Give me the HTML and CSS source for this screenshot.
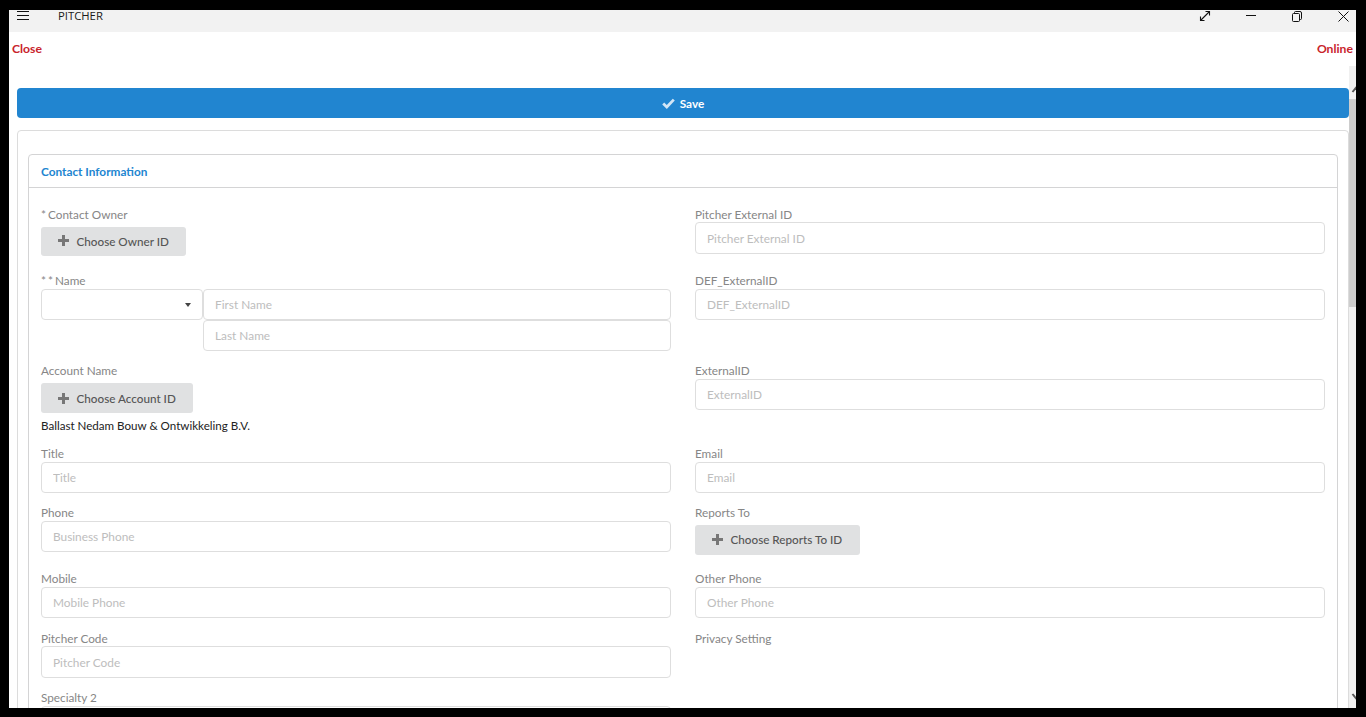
FILE: index.html
```html
<!DOCTYPE html>
<html lang="en">
<head>
    <meta charset="UTF-8">
    <meta name="viewport" content="width=device-width, initial-scale=1.0">
    <title>Pitcher</title>
    <link rel="stylesheet" href="styles.css">
</head>
<body>

    <div class="app-window">
        <!-- Title bar -->
        <div class="title-bar">
            <div class="title-left">
                <svg class="menu-icon" width="14" height="10" viewBox="0 0 14 10"><path d="M1 1.500h12M1 5.500h12M1 9.500h12" stroke="#111" fill="none"/></svg>
                <span class="app-name">PITCHER</span>
            </div>
            <div class="window-controls">
                <svg class="ctl-expand" width="12" height="12" viewBox="0 0 12 12"><path d="M1.500 10.500l9-9M6.500 1.500h4v4M1.500 6.500v4h4" stroke="#111" fill="none" stroke-width="1.100"/></svg>
                <svg class="ctl-min" width="10" height="2" viewBox="0 0 10 2"><path d="M0 .5h10" stroke="#111" fill="none"/></svg>
                <svg class="ctl-restore" width="10" height="11" viewBox="0 0 10 11"><path d="M.5 3.500a1 1 0 0 1 1-1h5a1 1 0 0 1 1 1v6a1 1 0 0 1-1 1h-5a1 1 0 0 1-1-1zM2.500 2.500v-1a1 1 0 0 1 1-1h4.500a1.500 1.500 0 0 1 1.500 1.500v5.500a1 1 0 0 1-1 1h-1" stroke="#111" fill="none"/></svg>
                <svg class="ctl-close" width="11" height="11" viewBox="0 0 11 11"><path d="M.5.5l10 10M10.500.5l-10 10" stroke="#111" fill="none"/></svg>
            </div>
        </div>

        <div class="status-row">
            <span>Close</span>
            <span>Online</span>
        </div>

        <div class="body-row">
            <div class="main-content">
                <button class="save-button">
                    <svg width="13" height="11" viewBox="0 0 13 11"><path d="M1.200 5.400l3.600 3.500 7-7.300" stroke="#d3e6f6" stroke-width="2.800" fill="none"/></svg>
                    Save
                </button>

                <div class="outer-card">
                    <div class="panel">
                        <div class="panel-heading">Contact Information</div>
                        <div class="form-grid">
                            <div class="field">
                                <label><span class="req">*</span>Contact Owner</label>
                                <button class="choose-button short"><span class="plus"></span>Choose Owner ID</button>
                            </div>
                            <div class="field">
                                <label>Pitcher External ID</label>
                                <input class="tall" placeholder="Pitcher External ID">
                            </div>

                            <div class="field">
                                <label><span class="req">*</span><span class="req">*</span>Name</label>
                                <div class="name-group">
                                    <div class="salutation"><span class="caret"></span></div>
                                    <div class="name-inputs">
                                        <input placeholder="First Name">
                                        <input placeholder="Last Name">
                                    </div>
                                </div>
                            </div>
                            <div class="field">
                                <label>DEF_ExternalID</label>
                                <input placeholder="DEF_ExternalID">
                            </div>

                            <div class="field">
                                <label>Account Name</label>
                                <button class="choose-button"><span class="plus"></span>Choose Account ID</button>
                                <p class="field-value">Ballast Nedam Bouw &amp; Ontwikkeling B.V.</p>
                            </div>
                            <div class="field">
                                <label>ExternalID</label>
                                <input placeholder="ExternalID">
                            </div>

                            <div class="field">
                                <label>Title</label>
                                <input placeholder="Title">
                            </div>
                            <div class="field">
                                <label>Email</label>
                                <input placeholder="Email">
                            </div>

                            <div class="field">
                                <label>Phone</label>
                                <input placeholder="Business Phone">
                            </div>
                            <div class="field">
                                <label>Reports To</label>
                                <button class="choose-button raised"><span class="plus"></span>Choose Reports To ID</button>
                            </div>

                            <div class="field">
                                <label>Mobile</label>
                                <input placeholder="Mobile Phone">
                            </div>
                            <div class="field">
                                <label>Other Phone</label>
                                <input placeholder="Other Phone">
                            </div>

                            <div class="field">
                                <label>Pitcher Code</label>
                                <input class="tall" placeholder="Pitcher Code">
                            </div>
                            <div class="field">
                                <label>Privacy Setting</label>
                            </div>

                            <div class="field">
                                <label>Specialty 2</label>
                                <input>
                            </div>
                        </div>
                    </div>
                </div>
            </div>

            <div class="scrollbar">
                <svg class="scroll-up" width="7" height="8" viewBox="0 0 7 8"><path d="M3.500 7l4-5" stroke="#555" stroke-width="2" fill="none"/></svg>
                <div class="scroll-thumb"></div>
                <svg class="scroll-down" width="7" height="8" viewBox="0 0 7 8"><path d="M3.500 1l4 5" stroke="#555" stroke-width="2" fill="none"/></svg>
            </div>
        </div>
    </div>

</body>
</html>
```

FILE: styles.css
```css
html, body {
    height: 100%;
}
body {
    margin: 0;
    box-sizing: border-box;
    padding: 10px 10px 9px 9px;
    background: #000;
    font-family: Lato, Arial, sans-serif;
    overflow: hidden;
}
.app-window {
    height: 100%;
    display: flex;
    flex-direction: column;
    background: white;
}
.title-bar {
    flex: none;
    height: 22px;
    background: #f2f2f2;
    display: flex;
    justify-content: space-between;
}
.title-left {
    display: flex;
    align-items: flex-start;
}
.menu-icon {
    margin: 0 0 0 7px;
}
.app-name {
    margin-left: 28px;
    font-family: "Open Sans", sans-serif;
    font-size: 11.3px;
    line-height: 11px;
    color: #1a1a1a;
}
.window-controls {
    display: flex;
    align-items: flex-start;
    margin-right: 7px;
}
.ctl-min {
    margin: 5px 0 0 35px;
}
.ctl-restore {
    margin: 1px 0 0 36px;
}
.ctl-close {
    margin: 1px 0 0 36px;
}
.status-row {
    flex: none;
    height: 34px;
    padding: 9px 3px 0 3px;
    box-sizing: border-box;
    display: flex;
    justify-content: space-between;
    font-size: 12.2px;
    line-height: 15px;
    font-weight: bold;
    color: #c8232c;
}
.body-row {
    flex: 1;
    min-height: 0;
    display: flex;
    overflow: hidden;
}
.main-content {
    flex: 1;
    min-width: 0;
    padding: 22px 0 0 8px;
}
.scrollbar {
    flex: none;
    width: 7px;
    display: flex;
    flex-direction: column;
    background: #f0f0f0;
}
.scroll-up {
    margin-top: 19px;
}
.scroll-thumb {
    height: 208px;
    margin-top: 6px;
    background: #cdcdcd;
}
.scroll-down {
    margin-top: auto;
    margin-bottom: 7px;
}
.save-button {
    display: flex;
    justify-content: center;
    align-items: center;
    gap: 5px;
    width: 100%;
    height: 30px;
    border: none;
    border-radius: 4px;
    background: #2185d0;
    color: white;
    font-family: inherit;
    font-size: 11.8px;
    font-weight: bold;
}
.outer-card {
    margin-top: 12px;
    padding: 23px 10px 0 10px;
    border: 1px solid #dcdcdc;
    border-radius: 4px 4px 0 0;
    height: 640px;
    box-sizing: border-box;
}
.panel {
    border: 1px solid #d4d4d5;
    border-radius: 4px 4px 0 0;
    height: 640px;
}
.panel-heading {
    height: 32px;
    padding-left: 12px;
    border-bottom: 1px solid #d4d4d5;
    font-size: 11.8px;
    font-weight: bold;
    line-height: 34px;
    color: #2185d0;
}
.form-grid {
    display: grid;
    grid-template-columns: 630px 630px;
    grid-template-rows: 66px 90px 83px 59px 66px 60px 59px auto;
    column-gap: 24px;
    padding: 20px 12px 0 12px;
}
.field label {
    display: block;
    height: 14px;
    font-size: 11.75px;
    line-height: 14px;
    color: #868686;
}
.req {
    margin-right: 2px;
}
.field input {
    display: block;
    width: 100%;
    height: 31px;
    margin-top: 1px;
    box-sizing: border-box;
    padding: 0 11px;
    border: 1px solid #dedede;
    border-radius: 4px;
    font-family: inherit;
    font-size: 11.85px;
    outline: none;
}
.field input.tall {
    height: 32px;
    margin-top: 0;
}
.field input::placeholder {
    color: #bdbdbd;
}
.choose-button {
    display: flex;
    align-items: center;
    height: 30px;
    margin-top: 5px;
    padding: 0 17px;
    border: none;
    border-radius: 3px;
    background: #e0e1e2;
    color: #555;
    font-family: inherit;
    font-size: 11.7px;
    line-height: 14px;
    font-weight: 500;
}
.choose-button.short {
    height: 29px;
    padding-bottom: 2px;
}
.choose-button.raised {
    padding: 0 18px 2px 17px;
}
.plus {
    flex: none;
    width: 11px;
    height: 11px;
    margin-right: 7.5px;
    background:
        linear-gradient(#777, #777) center / 11px 3px no-repeat,
        linear-gradient(#777, #777) center / 3px 11px no-repeat;
}
.name-group {
    display: flex;
    margin-top: 1px;
}
.salutation {
    flex: none;
    width: 162px;
    height: 31px;
    box-sizing: border-box;
    border: 1px solid #dedede;
    border-radius: 4px;
    display: flex;
    justify-content: flex-end;
    align-items: center;
    padding-right: 11px;
}
.caret {
    border-left: 3.5px solid transparent;
    border-right: 3.5px solid transparent;
    border-top: 4px solid #444;
}
.name-inputs {
    flex: 1;
}
.name-inputs input {
    margin-top: 0;
}
.field-value {
    margin: 5px 0 0 0;
    font-size: 11.6px;
    line-height: 15px;
    color: #222;
}
```
